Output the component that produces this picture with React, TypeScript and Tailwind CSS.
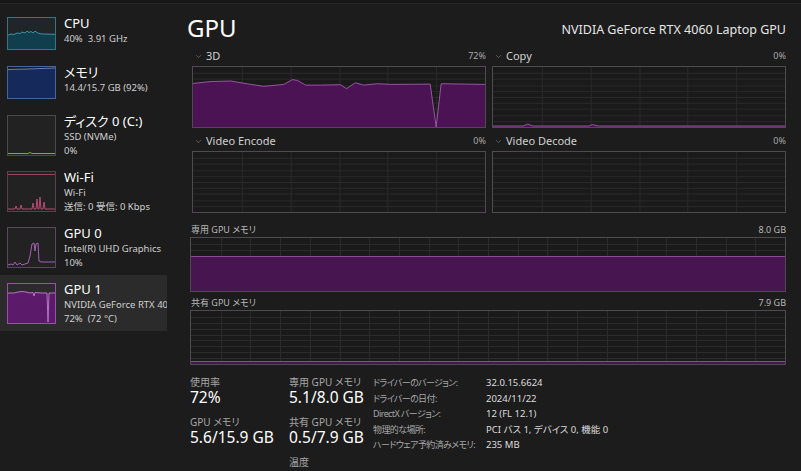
import React from 'react';
import { ChevronDown } from 'lucide-react';

type Pt = [number, number];

function GridLines({ w, h, cols, rows, color = '#2b2b2b' }: { w: number; h: number; cols: number; rows: number; color?: string }) {
  const lines: React.ReactNode[] = [];
  for (let i = 1; i < cols; i++) {
    const x = Math.round((i * w) / cols) + 0.5;
    lines.push(<line key={'c' + i} x1={x} y1={0} x2={x} y2={h} />);
  }
  for (let j = 1; j < rows; j++) {
    const y = Math.round((j * h) / rows) + 0.5;
    lines.push(<line key={'r' + j} x1={0} y1={y} x2={w} y2={y} />);
  }
  return (
    <g stroke={color} strokeWidth={1}>
      {lines}
    </g>
  );
}

const toLine = (pts: Pt[]) => pts.map((p, i) => `${i ? 'L' : 'M'}${p[0]},${p[1]}`).join(' ');
const toArea = (pts: Pt[], w: number, h: number) => `${toLine(pts)} L${w},${h} L0,${h} Z`;

// 3D engine history
const gpu3d: Pt[] = [
  [0, 17], [18, 15], [38, 14.5], [58, 18], [71, 20], [91, 18], [100, 13], [105, 14], [113, 18.7],
  [128, 18.7], [148, 18.3], [154, 22.3], [163, 16.3], [171, 18.7], [185, 17.3], [198, 18],
  [238, 17.7], [244, 62], [249, 17.3], [293, 18],
];

const copyPts: Pt[] = [
  [0, 61], [30, 61], [35, 59], [40, 61], [96, 61], [100, 59.5], [106, 61], [293, 61],
];

function EngineGraph({ label, pct, pts }: { label: string; pct: string; pts?: Pt[] }) {
  return (
    <div>
      <div className="flex h-[14px] items-center pl-[2px] mb-[3px]">
        <ChevronDown size={9} strokeWidth={1.5} className="text-[#8a8a8a]" />
        <span className="ml-[3px] text-[11px] leading-[14px] text-[#d0d0d0]">{label}</span>
        <span className="ml-auto text-[9px] leading-[14px] text-[#a8a8a8]">{pct}</span>
      </div>
      <div className="h-[62px] border border-[#4e4a4f] bg-[#1a1a1a]">
        <svg width="100%" height="100%" viewBox="0 0 293 62" preserveAspectRatio="none" className="block">
          <GridLines w={293} h={62} cols={6} rows={10} />
          {pts && (
            <>
              <path d={toArea(pts, 293, 62)} fill="#4b1353" />
              <path d={toLine(pts)} fill="none" stroke="#9a55a6" strokeWidth={1} />
            </>
          )}
        </svg>
      </div>
    </div>
  );
}

function MemGraph({ label, total, top }: { label: string; total: string; top: number }) {
  return (
    <div>
      <div className="flex h-[12px] items-center mb-[1px]">
        <span className="ml-[1px] text-[9px] leading-[12px] text-[#b8b8b8]">{label}</span>
        <span className="ml-auto text-[9px] leading-[12px] text-[#b8b8b8]">{total}</span>
      </div>
      <div className="h-[55px] border border-[#4e4a4f] bg-[#1a1a1a]">
        <svg width="100%" height="100%" viewBox="0 0 594 53" preserveAspectRatio="none" className="block">
          <GridLines w={594} h={53} cols={20} rows={9} />
          <rect x={0} y={top} width={594} height={53 - top} fill="#47154f" />
          <line x1={0} y1={top + 0.5} x2={594} y2={top + 0.5} stroke="#8e4a9a" strokeWidth={1} />
        </svg>
      </div>
    </div>
  );
}

function Thumb({ h, border, children }: { h: number; border: string; children: React.ReactNode }) {
  return (
    <div className={`w-[49px] shrink-0 border ${border}`} style={{ height: h }}>
      <svg width="100%" height="100%" viewBox={`0 0 47 ${h - 2}`} preserveAspectRatio="none" className="block">
        {children}
      </svg>
    </div>
  );
}

const cpuPts: Pt[] = [
  [0, 17], [3, 16], [6, 16.5], [9, 15], [12, 15.5], [14, 14], [17, 15], [19, 13], [21, 14.5], [23, 13.5],
  [25, 15], [27, 13], [29, 14.5], [31, 15.5], [34, 16], [38, 16], [42, 16.2], [47, 16.3],
];
const memPts: Pt[] = [[0, 2.5], [20, 2], [47, 1]];
const wifiPts: Pt[] = [
  [0, 37], [7, 37], [8, 34], [9, 37], [12, 37], [13, 33], [14, 37], [24, 37], [25, 31], [26, 37],
  [28, 37], [29, 27], [30, 37], [31, 37], [32, 25], [33, 37], [35, 37], [36, 30], [37, 37], [47, 37],
];
const gpu0Pts: Pt[] = [
  [0, 37], [3, 36], [5, 37], [7, 34], [9, 37], [12, 35], [14, 37], [17, 36], [20, 35], [22, 28],
  [24, 16], [26, 15], [27, 23], [28, 16], [30, 15], [31, 33], [33, 34], [47, 34],
];
const gpu1Pts: Pt[] = [
  [0, 9], [6, 9], [10, 8], [14, 7.5], [18, 8], [22, 9], [25, 8.5], [26, 12], [27, 8.5], [33, 9],
  [39, 9], [40, 38], [41, 9], [47, 9],
];

type Item = {
  title: string;
  lines: string[];
  selected?: boolean;
  thumb: React.ReactNode;
};

const items: Item[] = [
  {
    title: 'CPU',
    lines: ['40%  3.91 GHz'],
    thumb: (
      <Thumb h={33} border="border-[#3b7384]">
        <rect width={47} height={31} fill="#202527" />
        <path d={toArea(cpuPts, 47, 31)} fill="#103e4c" />
        <path d={toLine(cpuPts)} fill="none" stroke="#4aa8c4" strokeWidth={0.8} />
      </Thumb>
    ),
  },
  {
    title: 'メモリ',
    lines: ['14.4/15.7 GB (92%)'],
    thumb: (
      <Thumb h={33} border="border-[#46659f]">
        <path d={toArea(memPts, 47, 31)} fill="#15295a" />
        <path d={toLine(memPts)} fill="none" stroke="#7d98d2" strokeWidth={0.8} />
      </Thumb>
    ),
  },
  {
    title: 'ディスク 0 (C:)',
    lines: ['SSD (NVMe)', '0%'],
    thumb: (
      <Thumb h={41} border="border-[#4a4a4a]">
        <rect width={47} height={39} fill="#222222" />
        <path d="M0,37.5 L20,37.5 L22,36.5 L24,37.5 L47,37.5" fill="none" stroke="#7fae32" strokeWidth={1} />
      </Thumb>
    ),
  },
  {
    title: 'Wi-Fi',
    lines: ['Wi-Fi', '送信: 0 受信: 0 Kbps'],
    thumb: (
      <Thumb h={41} border="border-[#5a3f49]">
        <rect width={47} height={39} fill="#222222" />
        <line x1={0} y1={2.5} x2={47} y2={2.5} stroke="#9a4560" strokeWidth={1} />
        <path d={toLine(wifiPts)} fill="none" stroke="#c5507a" strokeWidth={0.9} />
      </Thumb>
    ),
  },
  {
    title: 'GPU 0',
    lines: ['Intel(R) UHD Graphics', '10%'],
    thumb: (
      <Thumb h={41} border="border-[#57485b]">
        <rect width={47} height={39} fill="#222222" />
        <path d={toLine(gpu0Pts)} fill="none" stroke="#b765c6" strokeWidth={0.9} />
      </Thumb>
    ),
  },
  {
    title: 'GPU 1',
    lines: ['NVIDIA GeForce RTX 4060 Laptop GPU', '72%  (72 °C)'],
    selected: true,
    thumb: (
      <Thumb h={41} border="border-[#9a4fa8]">
        <rect width={47} height={39} fill="#2b2b2b" />
        <path d={toArea(gpu1Pts, 47, 39)} fill="#5c1a6a" />
        <path d={toLine(gpu1Pts)} fill="none" stroke="#c77ad6" strokeWidth={0.9} />
      </Thumb>
    ),
  },
];

function SideRow({ item }: { item: Item }) {
  const tall = item.lines.length > 1;
  return (
    <div
      className={`flex overflow-hidden pl-[7px] ${tall ? 'h-[56px]' : 'h-[49px]'} ${
        item.selected ? 'bg-[#2b2b2b]' : ''
      }`}
    >
      <div className="pt-[8px]">{item.thumb}</div>
      <div className="ml-[8px] pt-[6px] whitespace-pre">
        <div className="text-[13px] leading-[17px] text-white">{item.title}</div>
        {item.lines.map((l, i) => (
          <div key={i} className="text-[9.5px] leading-[13.5px] text-[#cfcfcf]">
            {l}
          </div>
        ))}
      </div>
    </div>
  );
}

const driverRows: [string, string][] = [
  ['ドライバーのバージョン:', '32.0.15.6624'],
  ['ドライバーの日付:', '2024/11/22'],
  ['DirectX バージョン:', '12 (FL 12.1)'],
  ['物理的な場所:', 'PCI バス 1, デバイス 0, 機能 0'],
  ['ハードウェア予約済みメモリ:', '235 MB'],
];

export default function App() {
  return (
    <div className="h-[471px] w-[801px] overflow-hidden bg-[#1c1c1c] font-['Noto_Sans','Noto_Sans_CJK_JP',sans-serif] [font-feature-settings:'palt']">
      <div className="h-[4px] border-b border-[#262626] bg-[#171717]" />
      <div className="flex">
        {/* sidebar */}
        <div className="w-[167px] shrink-0 pt-[5px]">
          {items.map((it) => (
            <SideRow key={it.title} item={it} />
          ))}
        </div>

        {/* main */}
        <div className="flex-1 pl-[20px] pr-[15px]">
          <div className="flex h-[45px] items-start justify-between pt-[8px]">
            <div className="text-[24px] leading-[32px] text-white">GPU</div>
            <div className="mt-[10px] text-[12.5px] leading-[16px] text-[#e6e6e6]">NVIDIA GeForce RTX 4060 Laptop GPU</div>
          </div>

          <div className="ml-[5px] grid grid-cols-2 gap-x-[6px] gap-y-[6px]">
            <EngineGraph label="3D" pct="72%" pts={gpu3d} />
            <EngineGraph label="Copy" pct="0%" pts={copyPts} />
            <EngineGraph label="Video Encode" pct="0%" />
            <EngineGraph label="Video Decode" pct="0%" />
          </div>

          <div className="ml-[3px] mt-[11px] flex flex-col gap-[5px]">
            <MemGraph label="専用 GPU メモリ" total="8.0 GB" top={18} />
            <MemGraph label="共有 GPU メモリ" total="7.9 GB" top={50} />
          </div>

          <div className="ml-[3px] mt-[11px] flex">
            <div className="w-[99px]">
              <div className="text-[10px] leading-[12px] text-[#a6a6a6]">使用率</div>
              <div className="text-[15.5px] leading-[18px] text-white">72%</div>
              <div className="mt-[10px] text-[10px] leading-[12px] text-[#a6a6a6]">GPU メモリ</div>
              <div className="text-[15.5px] leading-[18px] text-white">5.6/15.9 GB</div>
            </div>
            <div className="w-[84px]">
              <div className="text-[10px] leading-[12px] text-[#a6a6a6]">専用 GPU メモリ</div>
              <div className="text-[15.5px] leading-[18px] text-white">5.1/8.0 GB</div>
              <div className="mt-[10px] text-[10px] leading-[12px] text-[#a6a6a6]">共有 GPU メモリ</div>
              <div className="text-[15.5px] leading-[18px] text-white">0.5/7.9 GB</div>
              <div className="mt-[10px] text-[10px] leading-[12px] text-[#a6a6a6]">温度</div>
            </div>
            <div className="-mt-[1px] w-[113px]">
              {driverRows.map(([k]) => (
                <div key={k} className="whitespace-nowrap text-[9px] leading-[15.5px] tracking-[-0.6px] text-[#a6a6a6]">
                  {k}
                </div>
              ))}
            </div>
            <div className="-mt-[1px]">
              {driverRows.map(([k, v]) => (
                <div key={k} className="whitespace-nowrap text-[9.5px] leading-[15.5px] text-[#dcdcdc]">
                  {v}
                </div>
              ))}
            </div>
          </div>
        </div>
      </div>
    </div>
  );
}
